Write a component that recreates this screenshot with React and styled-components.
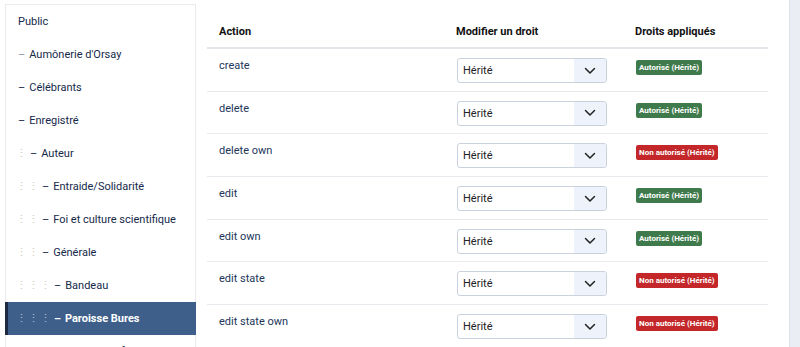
import React from "react";
import styled, { createGlobalStyle } from "styled-components";

const Global = createGlobalStyle`
  html, body { margin: 0; padding: 0; background: #fff; }
  body { font-family: Roboto, "Noto Sans", Arial, sans-serif; overflow: hidden; }
`;

const Page = styled.div`
  display: flex;
  height: 347px;
  width: 800px;
  overflow: hidden;
`;

const Sidebar = styled.div`
  margin: 4px 0 0 5px;
  width: 189px;
  border: 1px solid #e8ebef;
  border-bottom: none;
  background: #fff;
  flex: none;
`;

const TreeRow = styled.div`
  display: flex;
  align-items: center;
  height: 33px;
  padding-left: ${(p) => (p.$active ? 10 : 12)}px;
  font-size: 11px;
  color: ${(p) => (p.$active ? "#fff" : "#15294a")};
  font-weight: ${(p) => (p.$active ? 700 : 400)};
  background: ${(p) => (p.$active ? "#3e5f8a" : "transparent")};
  border-left: ${(p) => (p.$active ? "3px solid #1c2b42" : "none")};
  margin-left: ${(p) => (p.$active ? "-1px" : "0")};
  margin-right: ${(p) => (p.$active ? "-1px" : "0")};
  white-space: nowrap;
`;

const Dots = styled.span`
  display: inline-block;
  width: 12px;
  text-indent: -2px;
  color: ${(p) => (p.$active ? "#b3c1d3" : "#cfc9bb")};
  font-size: 11px;
  font-weight: 400;
`;

const Dash = styled.span`
  color: ${(p) => (p.$light ? "#8d97a5" : "inherit")};
  margin-right: 4px;
`;

const Main = styled.div`
  margin-left: 11px;
  width: 561px;
  flex: none;
  padding-top: 14px;
`;

const Table = styled.div`
  display: grid;
  grid-template-columns: 238px 179px 144px;
`;

const HeadCell = styled.div`
  font-size: 11px;
  font-weight: 700;
  color: #111;
  padding: 11px 0 9px ${(p) => p.$pl || 12}px;
  border-bottom: 2px solid #e2e6eb;
`;

const Cell = styled.div`
  height: 42.7px;
  border-bottom: 1px solid #e6e9ed;
  padding-left: ${(p) => p.$pl || 12}px;
  padding-top: ${(p) => p.$pt || 10}px;
  box-sizing: border-box;
  font-size: 11px;
  color: #22365a;
`;

const Select = styled.div`
  display: flex;
  width: 150px;
  height: 25px;
  box-sizing: border-box;
  border: 1px solid #c9d2dd;
  border-radius: 3px;
  overflow: hidden;
  background: #fff;
`;

const SelectText = styled.span`
  flex: 1;
  display: flex;
  align-items: center;
  padding-left: 5px;
  font-size: 11px;
  color: #222;
`;

const Arrow = styled.span`
  width: 32px;
  display: flex;
  align-items: center;
  justify-content: center;
  background: #eef3fb;
`;

const Badge = styled.span`
  display: inline-block;
  font-size: 8px;
  font-weight: 700;
  color: #fff;
  background: ${(p) => (p.$ok ? "#3f7a4c" : "#c3272a")};
  padding: 2px 3px;
  border-radius: 2px;
  line-height: 11px;
`;

const RightStrip = styled.div`
  margin-left: 21px;
  flex: 1;
  background: #eaeef4;
  border-left: 1px solid #dde2e8;
`;

const tree = [
  { label: "Public", level: -1 },
  { label: "Aumônerie d'Orsay", level: 0, light: true },
  { label: "Célébrants", level: 0 },
  { label: "Enregistré", level: 0 },
  { label: "Auteur", level: 1 },
  { label: "Entraide/Solidarité", level: 2 },
  { label: "Foi et culture scientifique", level: 2 },
  { label: "Générale", level: 2 },
  { label: "Bandeau", level: 3 },
  { label: "Paroisse Bures", level: 3, active: true },
  { label: "Paroisse Gif", level: 3 },
];

const rows = [
  ["create", true],
  ["delete", true],
  ["delete own", false],
  ["edit", true],
  ["edit own", true],
  ["edit state", false],
  ["edit state own", false],
];

const Chevron = () => (
  <svg width="12" height="8" viewBox="0 0 12 8" fill="none">
    <path d="M1.5 1.5 L6 6 L10.5 1.5" stroke="#222" strokeWidth="1.5" strokeLinecap="round" strokeLinejoin="round" />
  </svg>
);

export default function App() {
  return (
    <>
      <Global />
      <Page>
        <Sidebar>
          {tree.map((t) => (
            <TreeRow key={t.label} $active={t.active}>
              {Array.from({ length: Math.max(0, t.level) }).map((_, i) => (
                <Dots key={i} $active={t.active}>⋮</Dots>
              ))}
              {t.level >= 0 && <Dash $light={t.light}>–</Dash>}
              {t.label}
            </TreeRow>
          ))}
        </Sidebar>
        <Main>
          <Table>
            <HeadCell>Action</HeadCell>
            <HeadCell $pl={11}>Modifier un droit</HeadCell>
            <HeadCell $pl={11}>Droits appliqués</HeadCell>
            {rows.map(([name, ok]) => (
              <React.Fragment key={name}>
                <Cell>{name}</Cell>
                <Cell $pl={12} $pt={9}>
                  <Select>
                    <SelectText>Hérité</SelectText>
                    <Arrow><Chevron /></Arrow>
                  </Select>
                </Cell>
                <Cell $pl={12} $pt={11}>
                  <Badge $ok={ok}>{ok ? "Autorisé (Hérité)" : "Non autorisé (Hérité)"}</Badge>
                </Cell>
              </React.Fragment>
            ))}
          </Table>
        </Main>
        <RightStrip />
      </Page>
    </>
  );
}
